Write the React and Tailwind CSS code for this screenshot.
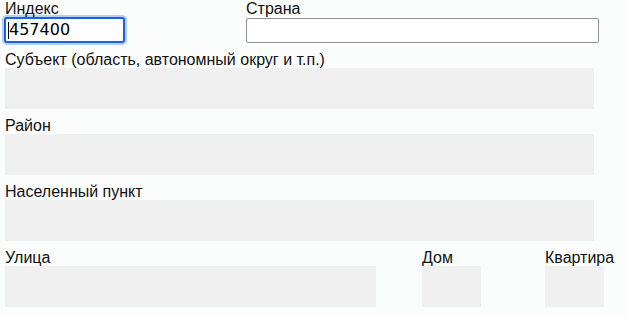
export default function App() {
  const label = "block whitespace-nowrap text-[16px] leading-[17px] text-[#111]";
  const box = "h-[41px] bg-[#f0f0f0]";
  return (
    <div className="min-h-[317px] w-[628px] bg-[#fbfdfd] pl-[5px]" style={{ fontFamily: '"Liberation Sans", Arial, sans-serif' }}>
      <div className="flex items-start">
        <div className="w-[241px]">
          <span className={label}>Индекс</span>
          <div className="-ml-px flex h-[26px] w-[121px] items-center rounded-[3px] border-2 border-[#1c5fe3] bg-white pl-[2px] shadow-[0_0_0_2px_#b3d0f6]">
            <span className="h-[17px] w-px bg-black" />
            <span className="text-[16px] leading-[20px] text-black" style={{ fontFamily: '"DejaVu Sans", sans-serif' }}>457400</span>
          </div>
        </div>
        <div>
          <span className={label}>Страна</span>
          <div className="mt-px h-[25px] w-[353px] rounded-[2px] border border-[#8f8f9d] bg-white" />
        </div>
      </div>
      <div className="mt-[8px]">
        <span className={label}>Субъект (область, автономный округ и т.п.)</span>
        <div className={`${box} w-[589px]`} />
      </div>
      <div className="mt-[8px]">
        <span className={label}>Район</span>
        <div className={`${box} w-[589px]`} />
      </div>
      <div className="mt-[8px]">
        <span className={label}>Населенный пункт</span>
        <div className={`${box} w-[589px]`} />
      </div>
      <div className="mt-[8px] flex">
        <div className="w-[417px]">
          <span className={label}>Улица</span>
          <div className={`${box} w-[371px]`} />
        </div>
        <div className="w-[123px]">
          <span className={label}>Дом</span>
          <div className={`${box} w-[59px]`} />
        </div>
        <div>
          <span className={label}>Квартира</span>
          <div className={`${box} w-[59px]`} />
        </div>
      </div>
    </div>
  );
}
